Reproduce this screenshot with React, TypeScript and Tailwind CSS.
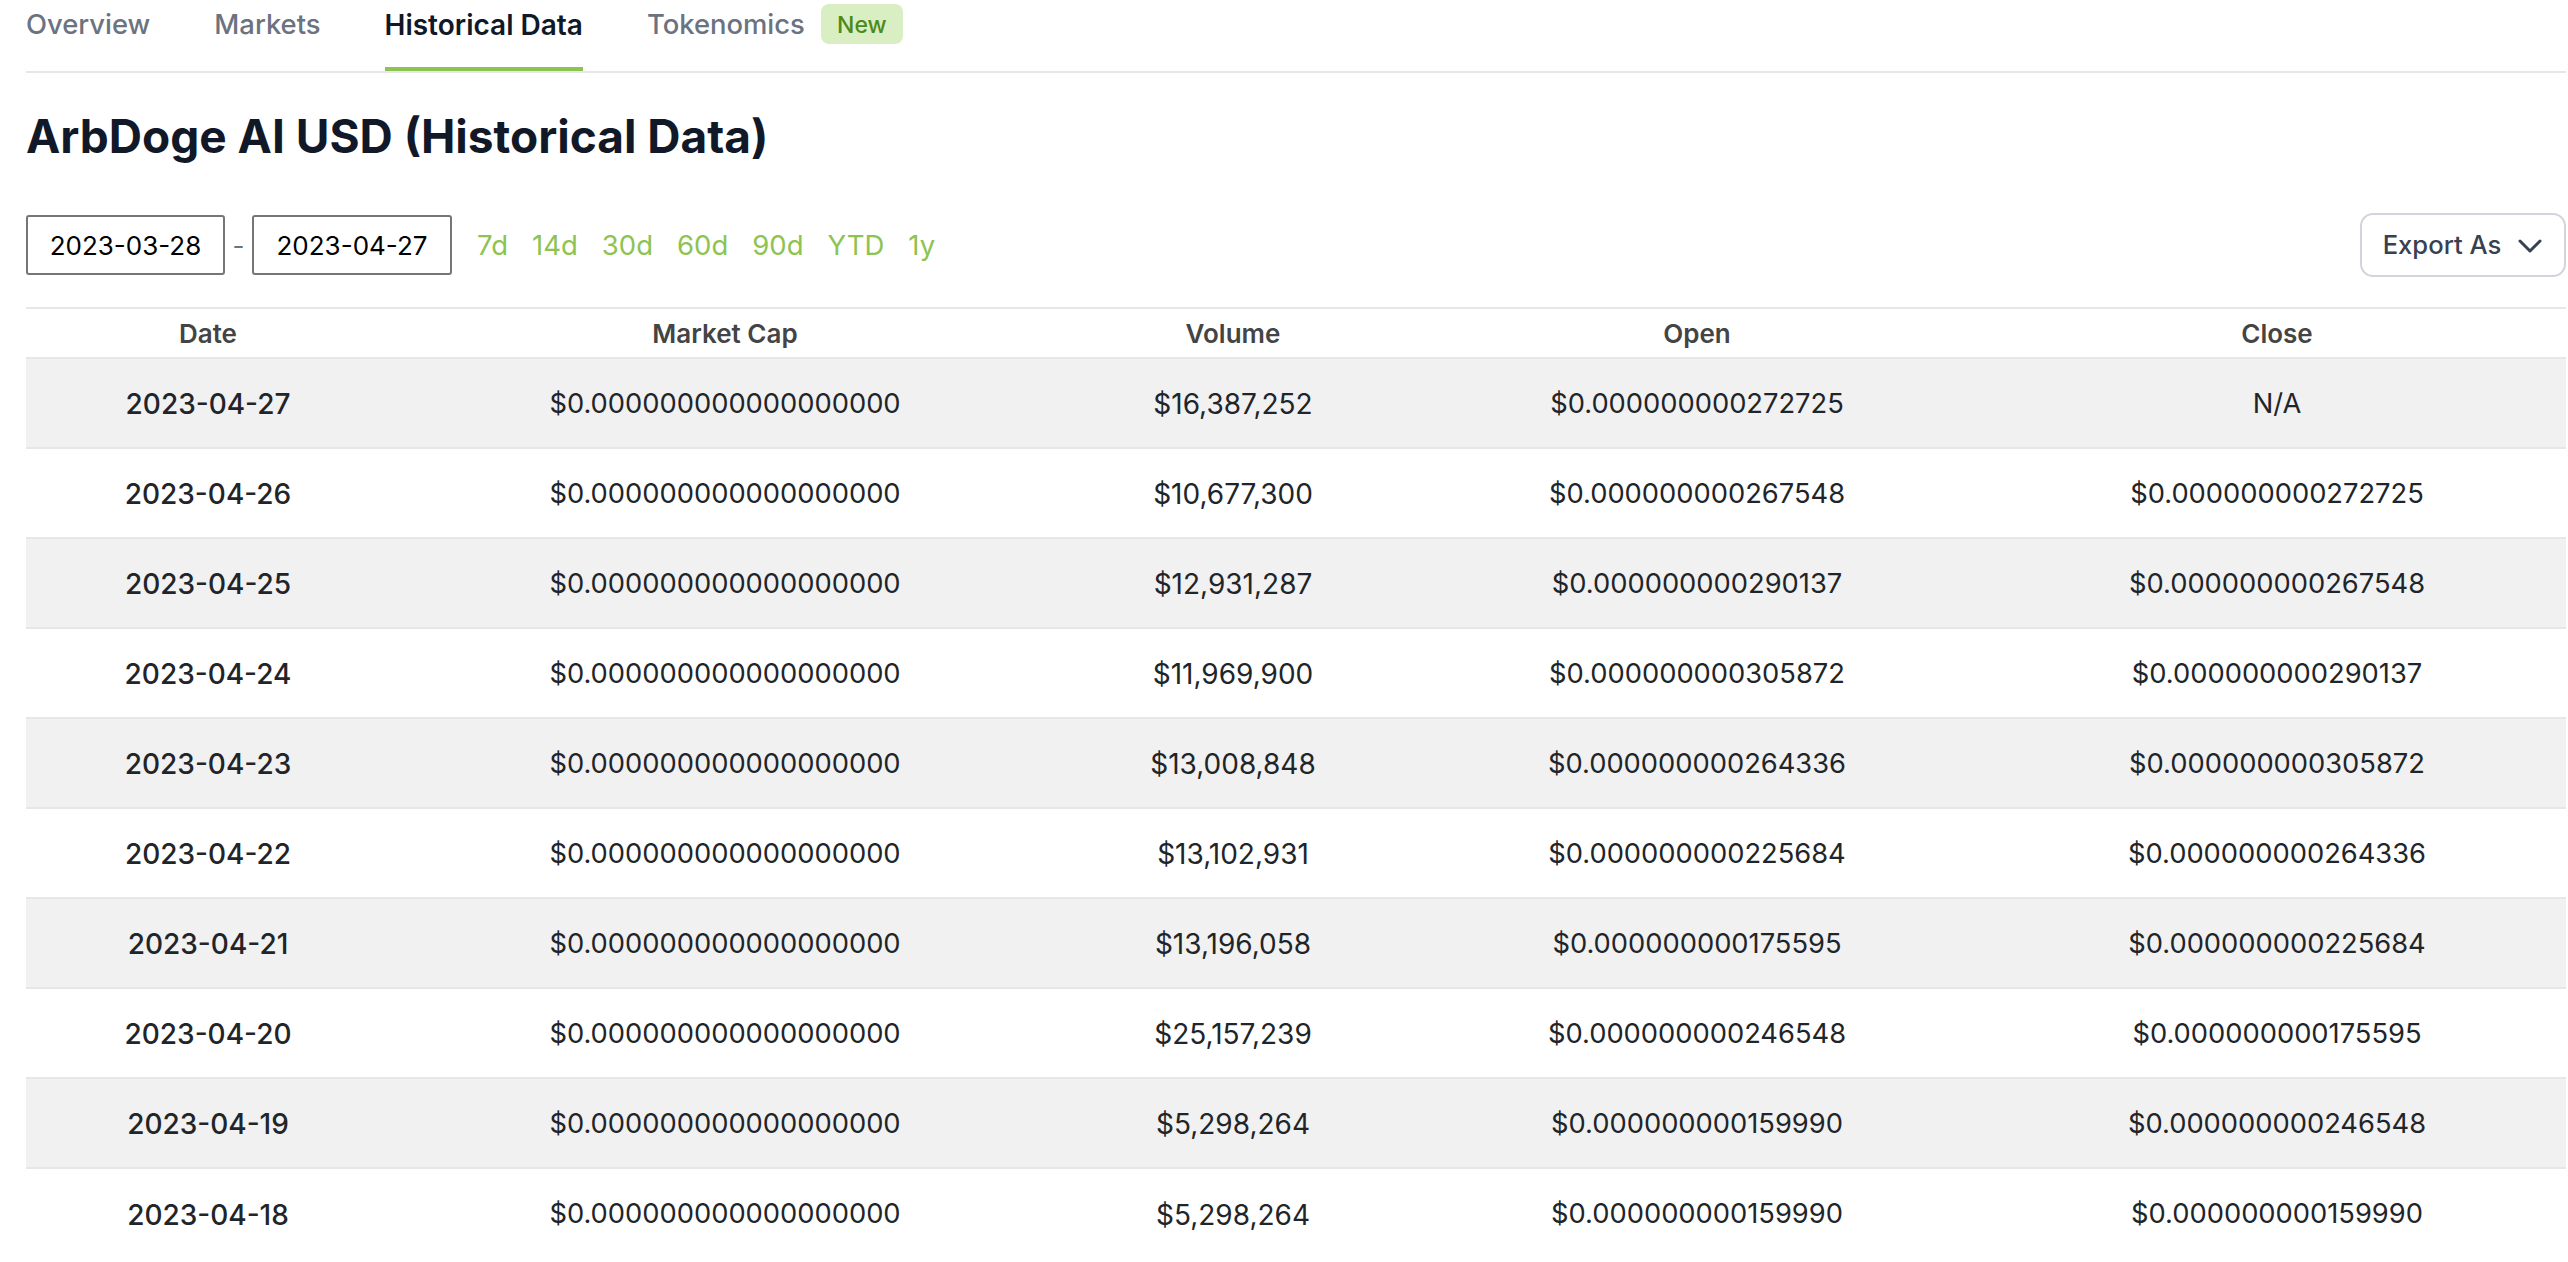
const rows = [
  ["2023-04-27", "$16,387,252", "$0.000000000272725", "N/A"],
  ["2023-04-26", "$10,677,300", "$0.000000000267548", "$0.000000000272725"],
  ["2023-04-25", "$12,931,287", "$0.000000000290137", "$0.000000000267548"],
  ["2023-04-24", "$11,969,900", "$0.000000000305872", "$0.000000000290137"],
  ["2023-04-23", "$13,008,848", "$0.000000000264336", "$0.000000000305872"],
  ["2023-04-22", "$13,102,931", "$0.000000000225684", "$0.000000000264336"],
  ["2023-04-21", "$13,196,058", "$0.000000000175595", "$0.000000000225684"],
  ["2023-04-20", "$25,157,239", "$0.000000000246548", "$0.000000000175595"],
  ["2023-04-19", "$5,298,264", "$0.000000000159990", "$0.000000000246548"],
  ["2023-04-18", "$5,298,264", "$0.000000000159990", "$0.000000000159990"],
];
const presets = ["7d", "14d", "30d", "60d", "90d", "YTD", "1y"];

export default function App() {
  return (
    <div className="h-[1262px] overflow-hidden bg-white pl-[26px] pr-[2px] [font-family:Inter,sans-serif] text-[#212529]">
      <div className="flex h-[73px] gap-[64px] border-b-2 border-[#e5e7eb] text-[27.4px] font-medium text-[#6b7280]">
        <div className="pt-[4px]">Overview</div>
        <div className="pt-[4px]">Markets</div>
        <div className="h-[71px] border-b-4 border-[#8dc351] pt-[4px] text-[28px] font-semibold text-[#111827]">Historical Data</div>
        <div className="flex items-start gap-[16px]">
          <span className="pt-[4px]">Tokenomics</span>
          <span className="mt-[4px] flex h-[40px] w-[82px] items-center justify-center rounded-[8px] bg-[#d9efc3] pt-[2px] text-[23px] text-[#4d8a1c]">New</span>
        </div>
      </div>
      <h1 className="mt-[38px] text-[46px] leading-[50px] font-bold text-[#111827]">ArbDoge AI USD (Historical Data)</h1>
      <div className="mt-[52px] flex h-[64px] items-center">
        <div className="flex h-[60px] w-[199px] items-center justify-center rounded-[3px] border-2 border-[#767676] pt-[1px] text-[26px] text-black">2023-03-28</div>
        <span className="w-[27px] text-center text-[26px] text-[#6b7280]">-</span>
        <div className="flex h-[60px] w-[200px] items-center justify-center rounded-[3px] border-2 border-[#767676] pt-[1px] text-[26px] text-black">2023-04-27</div>
        <div className="ml-[25px] flex gap-[24px] pt-[2px] text-[27.5px] text-[#8dc351]">
          {presets.map((p) => (
            <span key={p}>{p}</span>
          ))}
        </div>
        <div className="ml-auto flex h-[64px] w-[206px] items-center justify-center gap-[16px] rounded-[13px] border-2 border-[#d1d5db] pt-[1px] text-[25.6px] font-medium text-[#374151]">
          Export As
          <svg width="26" height="16" viewBox="0 0 26 16" fill="none" stroke="currentColor" strokeWidth="3" strokeLinecap="round" strokeLinejoin="round">
            <path d="M3 3l10 10 10-10" />
          </svg>
        </div>
      </div>
      <table className="mt-[30px] w-full table-fixed border-collapse text-center text-[27.3px]">
        <colgroup>
          <col className="w-[364px]" />
          <col className="w-[670px]" />
          <col className="w-[346px]" />
          <col className="w-[582px]" />
          <col />
        </colgroup>
        <thead>
          <tr className="h-[50px] border-y-2 border-[#e5e7eb] text-[26px] text-[#444444]">
            <th className="font-semibold">Date</th>
            <th className="font-semibold">Market Cap</th>
            <th className="font-semibold">Volume</th>
            <th className="font-semibold">Open</th>
            <th className="font-semibold">Close</th>
          </tr>
        </thead>
        <tbody>
          {rows.map((r, i) => (
            <tr key={r[0]} className={`h-[90px] border-b-2 border-[#e5e7eb] last:border-b-0 ${i % 2 === 0 ? "bg-[#f1f1f2]" : "bg-white"}`}>
              <td className="pt-[2px] text-[28px] font-medium">{r[0]}</td>
              <td className="pt-[2px]">$0.000000000000000000</td>
              <td className="pt-[2px] text-[28px]">{r[1]}</td>
              <td className="pt-[2px]">{r[2]}</td>
              <td className="pt-[2px]">{r[3]}</td>
            </tr>
          ))}
        </tbody>
      </table>
    </div>
  );
}
